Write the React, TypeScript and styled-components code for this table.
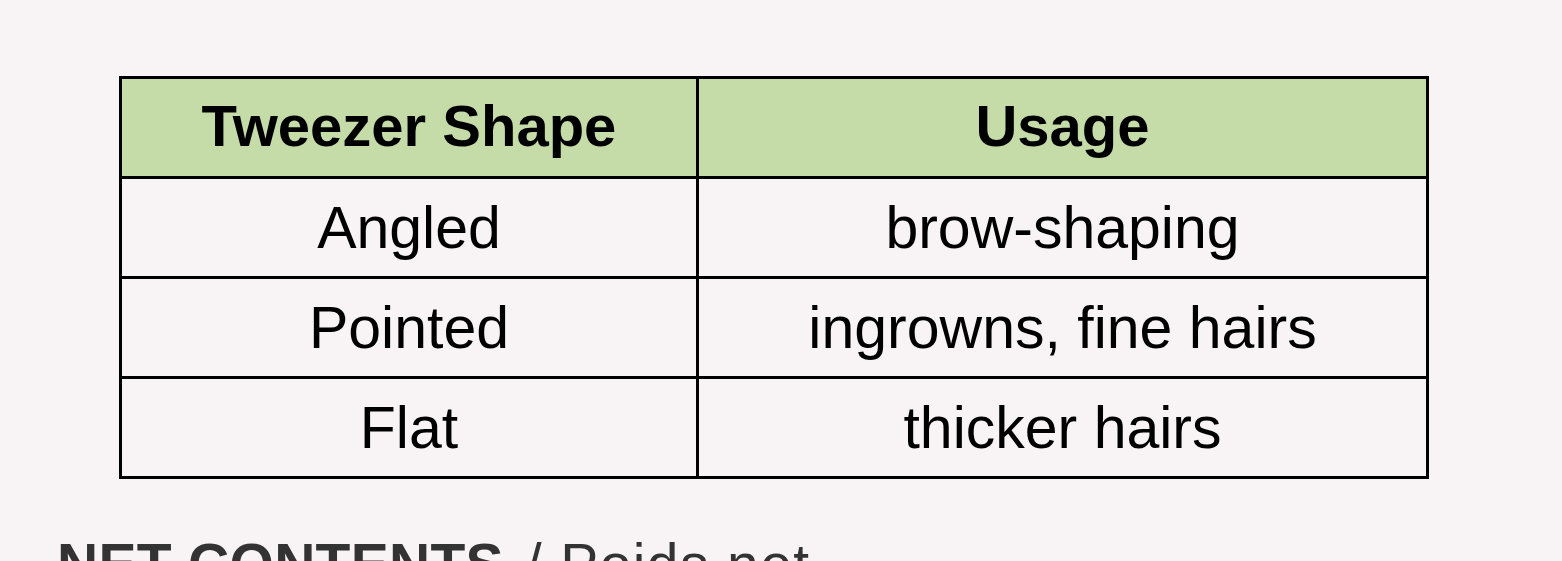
import React from "react";
import styled, { createGlobalStyle } from "styled-components";

const Global = createGlobalStyle`
  html, body { margin: 0; padding: 0; background: #f8f4f5; }
  body { font-family: "Liberation Sans", Arial, sans-serif; overflow: hidden; }
`;

const Page = styled.div`
  width: 1562px;
  height: 561px;
  overflow: hidden;
  display: flex;
  flex-direction: column;
  padding: 76px 0 0 0;
  box-sizing: border-box;
`;

const Table = styled.div`
  margin-left: 119px;
  width: 1310px;
  box-sizing: border-box;
  display: grid;
  grid-template-columns: 574px 727px;
  grid-auto-rows: 97px;
  gap: 3px;
  padding: 3px;
  background: #000;
`;

const Cell = styled.div<{ $head?: boolean }>`
  display: flex;
  align-items: center;
  justify-content: center;
  background: ${(p) => (p.$head ? "#c6dca8" : "#f8f4f5")};
  color: #000;
  font-family: "Liberation Sans", Arial, sans-serif;
  font-size: ${(p) => (p.$head ? "58px" : "59px")};
  font-weight: ${(p) => (p.$head ? 700 : 400)};
  padding-bottom: ${(p) => (p.$head ? "4px" : "0")};
  white-space: nowrap;
`;

const Footer = styled.div`
  margin: 52px 0 0 57px;
  font-family: "Liberation Sans", Arial, sans-serif;
  font-size: 57px;
  color: #333;
  white-space: nowrap;
  line-height: normal;
`;

const Strong = styled.span`
  font-weight: 700;
  letter-spacing: 0.3px;
`;

const Light = styled.span`
  margin-left: 6px;
  letter-spacing: 1.4px;
`;

const rows: [string, string][] = [
  ["Angled", "brow-shaping"],
  ["Pointed", "ingrowns, fine hairs"],
  ["Flat", "thicker hairs"],
];

export default function App() {
  return (
    <>
      <Global />
      <Page>
        <Table>
          <Cell $head>Tweezer Shape</Cell>
          <Cell $head>Usage</Cell>
          {rows.map(([a, b]) => (
            <React.Fragment key={a}>
              <Cell>{a}</Cell>
              <Cell>{b}</Cell>
            </React.Fragment>
          ))}
        </Table>
        <Footer>
          <Strong>NET CONTENTS</Strong> <Light>/ Poids net</Light>
        </Footer>
      </Page>
    </>
  );
}
